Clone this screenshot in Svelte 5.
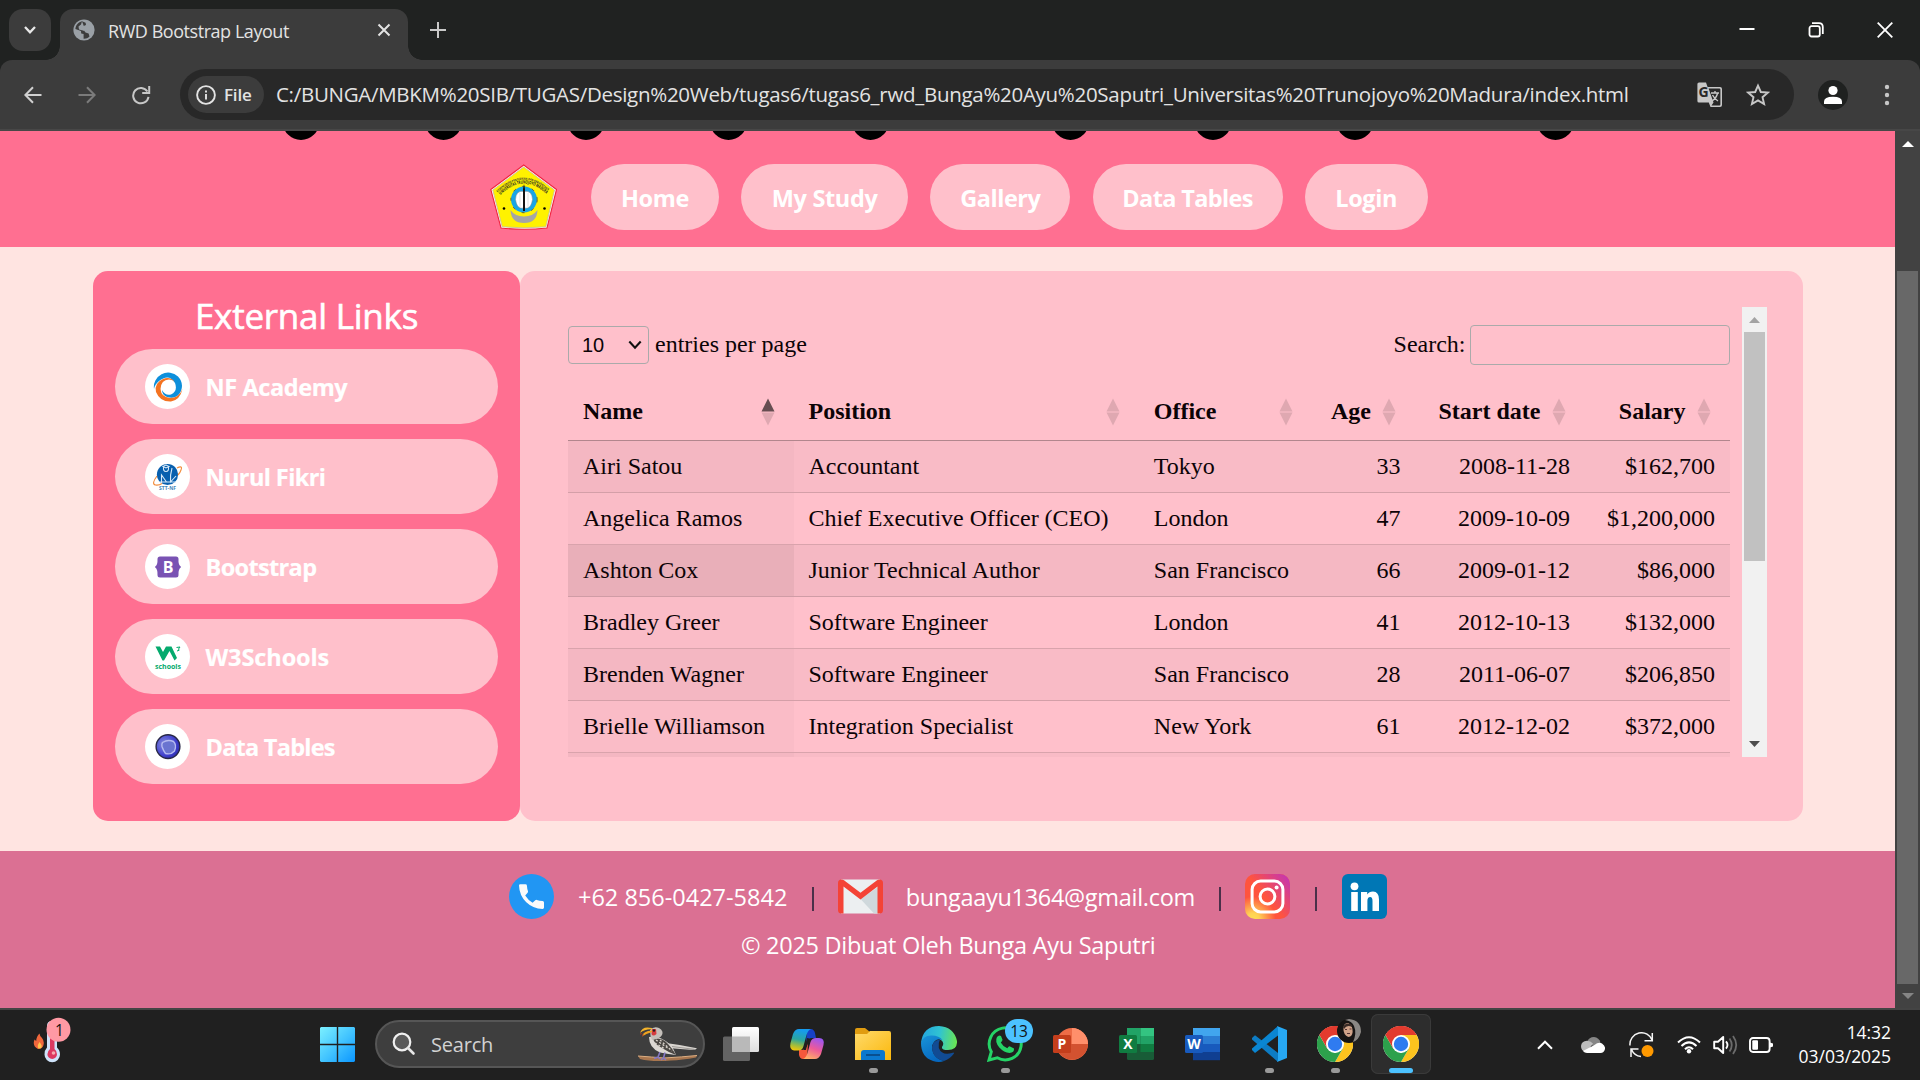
<script>
  const nav = [
    { label: 'Home', w: 128, track: -0.4 },
    { label: 'My Study', w: 167, track: -0.35 },
    { label: 'Gallery', w: 140, track: -0.45 },
    { label: 'Data Tables', w: 190, track: -0.65 },
    { label: 'Login', w: 123, track: -0.35 }
  ];
  const dots = [301, 443.5, 586, 728.5, 870.5, 1070.5, 1213, 1355, 1555.5];
  const links = [
    { label: 'NF Academy', track: -0.4 },
    { label: 'Nurul Fikri', track: -0.6 },
    { label: 'Bootstrap', track: -0.65 },
    { label: 'W3Schools', track: -0.1 },
    { label: 'Data Tables', track: -0.75 }
  ];
  const columns = [
    { label: 'Name', sorted: true },
    { label: 'Position' },
    { label: 'Office' },
    { label: 'Age', num: true },
    { label: 'Start date', num: true },
    { label: 'Salary', num: true }
  ];
  const rows = [
    ['Airi Satou', 'Accountant', 'Tokyo', '33', '2008-11-28', '$162,700'],
    ['Angelica Ramos', 'Chief Executive Officer (CEO)', 'London', '47', '2009-10-09', '$1,200,000'],
    ['Ashton Cox', 'Junior Technical Author', 'San Francisco', '66', '2009-01-12', '$86,000'],
    ['Bradley Greer', 'Software Engineer', 'London', '41', '2012-10-13', '$132,000'],
    ['Brenden Wagner', 'Software Engineer', 'San Francisco', '28', '2011-06-07', '$206,850'],
    ['Brielle Williamson', 'Integration Specialist', 'New York', '61', '2012-12-02', '$372,000'],
    ['', '', '', '', '', '']
  ];
  const hovered = 2;
</script>

{#snippet chrome()}
  <svg width="36" height="36" viewBox="0 0 36 36">
    <circle cx="18" cy="18" r="18" fill="#fff" />
    <path d="M18 18 L2.4 9 A18 18 0 0 1 33.6 9 Z" fill="#e33b2e" />
    <path d="M18 9 H33.6 A18 18 0 0 1 18 36 L25.8 22.5 Z" fill="#fcc31e" />
    <path d="M18 36 A18 18 0 0 1 2.4 9 L10.2 22.5 L18 27 L25.8 22.5 Z" fill="#2da14c" />
    <path d="M2.4 9 A18 18 0 0 1 33.6 9 H18 L10.2 22.5 Z" fill="#e33b2e" />
    <circle cx="18" cy="18" r="9" fill="#fff" />
    <circle cx="18" cy="18" r="7.2" fill="#2f7bf0" />
  </svg>
{/snippet}

{#snippet office(letter, base, bars)}
  <svg width="36" height="36" viewBox="1 0 36 36">
    {#each bars as c, i}
      <rect x="9" y={2 + i * 8} width="27" height="8.2" fill={c} />
    {/each}
    <rect x="1" y="9" width="18" height="18" rx="1.5" fill={base} />
    <text x="10" y="23" text-anchor="middle" class="office-letter">{letter}</text>
  </svg>
{/snippet}

<div class="screen">
  <div class="tabstrip">
    <div class="tab-search">
      <svg width="14" height="10" viewBox="0 0 14 10"><path d="M2 2 L7 7.3 L12 2" fill="none" stroke="#e8e8e8" stroke-width="2.3" /></svg>
    </div>
    <div class="tab">
      <svg class="globe" width="22" height="22" viewBox="0 0 22 22">
        <circle cx="11" cy="11" r="10.6" fill="#9aa0a6" />
        <path d="M9 2.2 C5.5 3 2.6 6.2 2.4 10 L8 12 L8.2 14.6 L10.6 15 V19.7 C14 19.8 15.5 18.5 16.5 17.5 L15.6 14.6 L12.5 13.4 L11 11.4 L8 10 L9.5 7.5 L13 6 L12.6 3.8 Z" fill="#3c3c3c" />
        <path d="M9 2.2 L8 5.5 L5.5 7.5 L6 10.5 L11 11.8 L12 9.5 L15 9.6 L18 12 L19.5 10 C19 6 16.5 3.4 13.6 2.5 L14 6.5 L11 7.5 Z" fill="#9aa0a6" />
      </svg>
      <span class="tab-title">RWD Bootstrap Layout</span>
      <svg width="14" height="14" viewBox="0 0 14 14"><path d="M1.5 1.5 L12.5 12.5 M12.5 1.5 L1.5 12.5" stroke="#e3e3e3" stroke-width="2" /></svg>
    </div>
    <svg class="newtab" width="16" height="16" viewBox="0 0 16 16"><path d="M8 0 V16 M0 8 H16" stroke="#c9c9c9" stroke-width="2" /></svg>
    <div class="win">
      <svg width="16" height="16" viewBox="0 0 16 16"><path d="M0.5 7 H15.5" stroke="#fff" stroke-width="2" /></svg>
      <svg width="16" height="16" viewBox="0 0 16 16"><rect x="1.5" y="4.2" width="10.3" height="10.3" rx="2" fill="none" stroke="#fff" stroke-width="1.8" /><path d="M4 1.2 H11 Q14.8 1.2 14.8 5 V12" fill="none" stroke="#fff" stroke-width="1.8" /></svg>
      <svg width="16" height="16" viewBox="0 0 16 16"><path d="M0.7 0.7 L15.3 15.3 M15.3 0.7 L0.7 15.3" stroke="#fff" stroke-width="1.8" /></svg>
    </div>
  </div>

  <div class="toolbar-wrap">
    <div class="toolbar">
      <svg width="18" height="18" viewBox="0 0 18 18"><path d="M17.5 9 H1.5 M9 1.3 L1.4 9 L9 16.7" fill="none" stroke="#d0d0d0" stroke-width="2" /></svg>
      <svg class="fwd" width="18" height="18" viewBox="0 0 18 18"><path d="M0.5 9 H16.5 M9 1.3 L16.6 9 L9 16.7" fill="none" stroke="#7b7b7b" stroke-width="2" /></svg>
      <svg class="reload" width="20" height="20" viewBox="0 0 20 20"><path d="M16.4 6.5 A7.7 7.7 0 1 0 17.5 11.8" fill="none" stroke="#c7c7c7" stroke-width="2" /><path d="M18.2 1 V8 H11.2" fill="none" stroke="#c7c7c7" stroke-width="2" /></svg>
      <div class="omni">
        <div class="chip">
          <svg width="20" height="20" viewBox="0 0 20 20"><circle cx="10" cy="10" r="8.9" fill="none" stroke="#e3e3e3" stroke-width="1.9" /><path d="M10 9 V14.6 M10 5.4 V7.4" stroke="#e3e3e3" stroke-width="1.9" /></svg>
          <span>File</span>
        </div>
        <span class="url">C:/BUNGA/MBKM%20SIB/TUGAS/Design%20Web/tugas6/tugas6_rwd_Bunga%20Ayu%20Saputri_Universitas%20Trunojoyo%20Madura/index.html</span>
        <svg class="translate" width="26" height="26" viewBox="0 0 26 26">
          <path d="M2 0.5 H9 L10.6 5 H23 Q25 5 25 7 V23 Q25 25 23 25 H13.5 L11.8 20.5 H2 Q0.4 20.5 0.4 19 V2 Q0.4 0.5 2 0.5 Z" fill="#c7c7c7" />
          <path d="M11.6 6.6 H22.4 Q23.4 6.6 23.4 7.6 V22.4 Q23.4 23.4 22.4 23.4 H14.5 L16.5 20.5 Z" fill="#282828" />
          <path d="M14 11 H22 M18 9 V11 M20.6 11 Q19.5 16 15 19 M15.5 13 Q17.5 17 21 19" fill="none" stroke="#c7c7c7" stroke-width="1.4" />
          <text x="1.6" y="15.4" class="g">G</text>
        </svg>
        <svg class="star" width="24" height="24" viewBox="0 0 24 24"><path d="M12 2.6 L14.8 9 L21.8 9.6 L16.5 14.2 L18.1 21.1 L12 17.4 L5.9 21.1 L7.5 14.2 L2.2 9.6 L9.2 9 Z" fill="none" stroke="#c7c7c7" stroke-width="1.9" /></svg>
      </div>
      <svg class="profile" width="30" height="30" viewBox="0 0 30 30"><circle cx="15" cy="15" r="15" fill="#1f2120" /><circle cx="15" cy="10.5" r="4.6" fill="#fff" /><path d="M6 24 V21.5 Q6 16.8 15 16.8 Q24 16.8 24 21.5 V24 Z" fill="#fff" /></svg>
      <svg width="6" height="22" viewBox="0 0 6 22"><g fill="#c7c7c7"><circle cx="3" cy="3" r="2.2" /><circle cx="3" cy="11" r="2.2" /><circle cx="3" cy="19" r="2.2" /></g></svg>
    </div>
  </div>

  <div class="viewport">
    <div class="page">
      <header>
        <svg class="balls" width="1895" height="33" viewBox="0 0 1895 33">
          {#each dots as x}<circle cx={x} cy="-9.4" r="18.4" />{/each}
        </svg>
        <nav>
          <svg class="crest" width="68" height="66" viewBox="0 0 68 66">
            <path d="M33.7 1 L66.5 25.5 L57 64 Q34 66.5 11 64 L0.8 25.5 Z" fill="#fff" stroke="#f0233f" stroke-width="1.1" />
            <path d="M33.7 3 L64.5 26 L55.8 62.8 Q34 65 12.2 62.8 L2.8 26 Z" fill="#fff200" stroke="#c9c29a" stroke-width="0.9" />
            <path id="arcA" d="M10.5 31 Q34 8 57.5 31" fill="none" />
            <path id="arcB" d="M7.5 28.5 Q34 3 60 28.5" fill="none" />
            <text class="crest-a"><textPath href="#arcA" textLength="52" lengthAdjust="spacingAndGlyphs">UNIVERSITAS TRUNOJOYO MADURA</textPath></text>
            <text class="crest-b"><textPath href="#arcB" textLength="57" lengthAdjust="spacingAndGlyphs">KEMENTERIAN PENDIDIKAN DAN KEBUDAYAAN</textPath></text>
            <path d="M20.5 46 Q25 52.5 34 52.5 Q43 52.5 47.5 46 Q47 59 34 59 Q21 59 20.5 46 Z" fill="#a5a5a5" />
            <circle cx="34" cy="35.5" r="13" fill="#19a5e5" />
            <circle cx="34" cy="35.5" r="13.2" fill="none" stroke="#5c5b36" stroke-width="1" stroke-dasharray="3 7" />
            <path d="M34 27.5 Q26 26 25.5 35.5 Q27 46 34 44 Q41 46 42.5 35.5 Q42 26 34 27.5 Z" fill="#fff" stroke="#888" stroke-width="0.5" />
            <path d="M30 29 V43 M38 29 V43" stroke="#ccc" stroke-width="0.6" />
            <path d="M34 20 L35 25 V47 H33 V25 Z" fill="#111" />
            <circle cx="14" cy="44.5" r="1.3" /><circle cx="54.5" cy="44.5" r="1.3" />
          </svg>
          {#each nav as n}
            <a class="navpill" href="#top" style="width:{n.w}px;letter-spacing:{n.track}px">{n.label}</a>
          {/each}
        </nav>
      </header>

      <main>
        <aside>
          <h2>External Links</h2>
          {#each links as link, i}
            <a class="link" href="#top" style="letter-spacing:{link.track}px">
              <span class="badge">
                {#if i === 0}
                  <svg width="30" height="30" viewBox="0 0 30 30">
                    <path d="M1 17 A14.3 14.3 0 0 1 25 4.5 Q31 11 28 19 Q24 28 14 25 Q9 23 9 18 Q12 24 18 22.5 Q25 19 22 11 Q16 1 6 9 Q2 12 1 17 Z" fill="#0d8fdb" />
                    <path d="M22 10 Q17 4 10 7 Q1 11 3 20 Q7 30 18 29.5 Q27 28 29.5 17 Q26 26 17 26 Q8 25 7.5 17 Q8 8 16 7.6 Q20 8 22 10 Z" fill="#f47321" />
                  </svg>
                {:else if i === 1}
                  <svg width="32" height="30" viewBox="0 0 32 30">
                    <circle cx="15.5" cy="12.5" r="10.6" fill="#075fae" />
                    <path d="M5 14 Q-1 22 3.5 23 Q7 23.5 10 21.5 M25 6 Q31 3 29 8 Q28 11 26 13" fill="none" stroke="#f28b3a" stroke-width="1.1" />
                    <path d="M9.5 21 V13 L14.5 20 M20 6 Q18 13 18.5 20 L24 14 M11 4.5 L14 3 L17 4.5 L14 6 Z M11.5 5 Q11 9.5 14 9.5 Q17 9.5 16.5 5 M8 20 H24" fill="none" stroke="#d7e9f8" stroke-width="1.1" />
                    <text x="15.5" y="28" text-anchor="middle" class="stt">STT-NF</text>
                  </svg>
                {:else if i === 2}
                  <svg width="26" height="24" viewBox="0 0 26 24">
                    <path d="M5 1.5 H21 Q23.5 1.5 23.5 4 Q23.2 10 25.8 11.5 V12.5 Q23.2 14 23.5 20 Q23.5 22.5 21 22.5 H5 Q2.5 22.5 2.5 20 Q2.8 14 0.2 12.5 V11.5 Q2.8 10 2.5 4 Q2.5 1.5 5 1.5 Z" fill="#7952b3" />
                    <text x="13" y="17.6" text-anchor="middle" class="bs">B</text>
                  </svg>
                {:else if i === 3}
                  <svg width="28" height="28" viewBox="0 0 28 28">
                    <path d="M1.5 3.5 H6 L9 9 L12 3.5 H17.5 L23 15 L20.5 17.5 L15.5 8 L10 17.5 H8.5 Z" fill="#04aa6d" />
                    <path d="M22.5 4.5 L26 4 L24.5 6 Q26.5 7.5 23 8" fill="none" stroke="#04aa6d" stroke-width="1" />
                    <text x="14" y="25.5" text-anchor="middle" class="w3">schools</text>
                  </svg>
                {:else}
                  <svg width="26" height="26" viewBox="0 0 26 26">
                    <defs><radialGradient id="dt" cx="0.35" cy="0.4" r="0.75"><stop offset="0" stop-color="#8a90dc" /><stop offset="0.6" stop-color="#4444cf" /><stop offset="1" stop-color="#2525a8" /></radialGradient></defs>
                    <circle cx="13" cy="12.6" r="11.9" fill="url(#dt)" stroke="#282846" stroke-width="1.4" />
                    <path d="M7.5 8.5 Q13 5 18.5 7.5 Q22 11 19.5 17 Q16 21 10.5 19.5 Q8.5 17 7 12.5 Q6.5 10 7.5 8.5 Z" fill="#6a74d0" stroke="#b6baf0" stroke-width="1.4" />
                  </svg>
                {/if}
              </span>
              {link.label}
            </a>
          {/each}
        </aside>

        <section>
          <div class="scroller">
            <div class="dt">
              <div class="controls">
                <div class="select">10
                  <svg width="14" height="10" viewBox="0 0 14 10"><path d="M1.3 1.5 L7 7.6 L12.7 1.5" fill="none" stroke="#111" stroke-width="2.1" /></svg>
                </div>
                <span class="per">entries per page</span>
                <span class="search-label">Search:</span>
                <input aria-label="Search" />
              </div>
              <div class="row head">
                {#each columns as c}
                  <div class="cell" class:num={c.num}>
                    <span>{c.label}</span>
                    <svg width="14" height="28" viewBox="0 0 14 28"><path d="M7 0.5 L13.5 13.5 H0.5 Z" fill-opacity={c.sorted ? 0.6 : 0.125} /><path d="M7 27.5 L13.5 14.5 H0.5 Z" fill-opacity="0.125" /></svg>
                  </div>
                {/each}
              </div>
              {#each rows as r, i}
                <div class="row body" class:odd={i % 2 === 0} class:hover={i === hovered}>
                  {#each r as v, j}
                    <div class="cell" class:num={j > 2}>{v}</div>
                  {/each}
                </div>
              {/each}
            </div>
            <div class="sb light">
              <svg width="11" height="6" viewBox="0 0 11 6"><path d="M5.5 0 L11 6 H0 Z" fill="#a3a3a3" /></svg>
              <div class="thumb"></div>
              <svg width="11" height="6" viewBox="0 0 11 6"><path d="M5.5 6 L11 0 H0 Z" fill="#4d4d4d" /></svg>
            </div>
          </div>
        </section>
      </main>

      <footer>
        <div class="contacts">
          <svg width="45" height="45" viewBox="0 0 45 45"><circle cx="22.5" cy="22.5" r="22.5" fill="#2196f3" /><path d="M10 11.5 Q10 10.2 11.3 10.2 H16.5 Q17.8 10.2 17.9 11.5 Q18.1 15 19 17.2 Q19.2 18 18.6 18.7 L16.2 21.6 Q19 26.2 23.6 28.8 L26.3 26.2 Q27 25.6 27.8 25.9 Q30.5 26.9 33.6 27 Q35 27.1 35 28.4 V33.4 Q35 34.8 33.6 34.9 Q24 34.8 17.3 28.3 Q10.3 21.4 10 11.5 Z" fill="#fafafa" /></svg>
          <span class="phone">+62 856-0427-5842</span>
          <i></i>
          <svg width="45" height="35" viewBox="0 0 45 35"><rect x="3" y="0.5" width="39" height="34" fill="#eceff1" /><path d="M22.5 20 L40 8 V34.5 H36 Z" fill="#cfd8dc" /><path d="M0 4 Q0 0.5 3.5 0.5 Q5 0.5 6 1.3 L22.5 13.8 L39 1.3 Q40 0.5 41.5 0.5 Q45 0.5 45 4 V31 Q45 34.5 41.5 34.5 H39.5 V7.5 L22.5 20.5 L5.5 7.5 V34.5 H3.5 Q0 34.5 0 31 Z" fill="#f44336" /></svg>
          <span class="mail">bungaayu1364@gmail.com</span>
          <i></i>
          <svg width="45" height="45" viewBox="0 0 45 45">
            <defs>
              <radialGradient id="ig1" cx="0.18" cy="1" r="1"><stop offset="0" stop-color="#ffdd55" /><stop offset="0.13" stop-color="#ffd355" /><stop offset="0.5" stop-color="#ff543e" /><stop offset="1" stop-color="#ff543e" /></radialGradient>
              <linearGradient id="ig2" x1="0.45" y1="0.5" x2="1" y2="0.05"><stop offset="0" stop-color="#c837ab" stop-opacity="0" /><stop offset="0.9" stop-color="#c837ab" /></linearGradient>
            </defs>
            <rect width="45" height="45" rx="10" fill="url(#ig1)" /><rect width="45" height="45" rx="10" fill="url(#ig2)" />
            <rect x="7.1" y="7.1" width="30.8" height="30.8" rx="8.5" fill="none" stroke="#fff" stroke-width="3" />
            <circle cx="22.5" cy="22.5" r="7.4" fill="none" stroke="#fff" stroke-width="3" /><circle cx="31.6" cy="13.4" r="2" fill="#fff" />
          </svg>
          <i></i>
          <svg width="45" height="45" viewBox="0 0 45 45"><rect width="45" height="45" rx="6" fill="#0077b5" /><circle cx="12.5" cy="12.3" r="3.9" fill="#fff" /><path d="M9.2 18 H15.8 V37 H9.2 Z M19 18 H25.2 V20.6 Q27 17.5 31 17.5 Q37 17.8 37 25.5 V37 H30.5 V27 Q30.5 23 28.2 23 Q25.4 23 25.4 27 V37 H19 Z" fill="#fff" /></svg>
        </div>
        <p>© 2025 Dibuat Oleh Bunga Ayu Saputri</p>
      </footer>
    </div>
    <div class="sb dark">
      <svg width="12" height="6" viewBox="0 0 12 6"><path d="M6 0 L12 6 H0 Z" fill="#fff" /></svg>
      <div class="thumb"></div>
      <svg width="12" height="6" viewBox="0 0 12 6"><path d="M6 6 L12 0 H0 Z" fill="#858585" /></svg>
    </div>
  </div>

  <div class="taskbar">
    <svg class="weather" width="44" height="50" viewBox="0 0 44 50">
      <path d="M5 33 Q-1 30 1.5 23.5 L3.2 25 Q3.5 20 6.5 17.5 Q7 21 9 22 Q11.5 25 10.5 29 Q9.5 33 5 33 Z" fill="#f0673c" /><path d="M5.5 32.5 Q3.5 30 6.5 26 Q10 30 8 32.3 Z" fill="#ffc34c" />
      <path d="M14 10 Q14 5 19 5 Q24 5 24 10 V31.5 Q27 34 27 38.5 A7.7 7.7 0 0 1 11.5 38.5 Q11.5 34 14 31.5 Z" fill="#cfe3fa" />
      <path d="M17 12 H21.5 V33 Q24 35 24 38.2 A4.8 4.8 0 0 1 14.4 38.2 Q14.5 35 17 33 Z" fill="#dd3860" /><circle cx="20.5" cy="37" r="1.8" fill="#f8a8b0" />
      <circle cx="25.5" cy="13.8" r="12" fill="#ff99a4" />
      <text x="26.5" y="19.5" text-anchor="middle" class="n">1</text>
    </svg>
    <svg class="start" width="35" height="35" viewBox="0 0 35 35">
      <defs><linearGradient id="win" gradientUnits="userSpaceOnUse" x1="0" y1="0" x2="35" y2="35"><stop offset="0" stop-color="#7cf0ff" /><stop offset="0.5" stop-color="#45c6ff" /><stop offset="1" stop-color="#0b96ff" /></linearGradient></defs>
      <path d="M1 0 H16.8 V16.8 H0 V1 Z M18.2 0 H34 L35 1 V16.8 H18.2 Z M0 18.2 H16.8 V35 H1 L0 34 Z M18.2 18.2 H35 V34 L34 35 H18.2 Z" fill="url(#win)" />
    </svg>
    <div class="searchbox">
      <svg width="24" height="24" viewBox="0 0 24 24"><circle cx="10" cy="10" r="8.3" fill="#5a5a5a" stroke="#f0f0f0" stroke-width="2.2" /><path d="M16 16 L21.5 21.5" stroke="#e6e6e6" stroke-width="2.6" stroke-linecap="round" /></svg>
      <span>Search</span>
      <svg class="bird" width="60" height="37" viewBox="0 0 60 37">
        <path d="M0 30 Q14 31 26 32 Q44 31 59 29.5 L58 31.5 Q44 34 33 34.5 Q14 36 2 33 Z" fill="#a8764f" /><path d="M0 30 Q14 31 26 32 Q44 31 59 29.5" fill="none" stroke="#dcae82" stroke-width="1" />
        <path d="M28 17 Q44 19 59 22.3 Q58 24.3 52 23.7 L30 22 Z" fill="#d9d5d0" /><path d="M34 20.5 L56 23.3" stroke="#8e8a86" stroke-width="0.8" />
        <path d="M11 11 Q18 9 26 14 Q34 18 38 29 Q31 28 22 26.5 Q11 22 11 11 Z" fill="#dcd8d3" />
        <path d="M15 12 Q26 12 30 18 Q34 22 38 29 Q30 26 24 22 Q16 18 15 12 Z" fill="#4b4743" /><path d="M18 14 L31 23 M22 14 L34 25 M17 17 L27 23" stroke="#d8d2ca" stroke-width="1.3" stroke-dasharray="2 2" />
        <path d="M12 4 Q16 0 21 2 Q26 5 24 9 Q22 13 14 14 Q12 10 12 4 Z" fill="#c4bfba" /><path d="M14 3 H18 L18.5 8 Q15 11 13.5 8 Z" fill="#d53b3e" /><circle cx="16" cy="4.5" r="1.2" fill="#222" />
        <path d="M14 2 Q4 -0.5 2 7 Q7 3 14 3.4 Z" fill="#f4b32b" /><path d="M14 4.4 Q5 4.6 4 10.5 Q8 7.5 14 6 Z" fill="#f0a41f" /><path d="M2.5 6.5 L2 9 L4 7.6 Z M4.6 8 L4 10.8 L6 9 Z" fill="#9a352e" />
        <path d="M22 26 L20 31 M16 32.5 L20 31 L22 33 M27 26.5 L25.5 32 M23 34 L25.5 32 L28 34" fill="none" stroke="#8577c4" stroke-width="1.6" />
      </svg>
    </div>
    <div class="apps">
      <div class="app">
        <svg width="36" height="36" viewBox="0 0 36 36"><defs><linearGradient id="tv" x1="0" y1="0" x2="0" y2="1"><stop offset="0" stop-color="#fff" /><stop offset="1" stop-color="#dedede" /></linearGradient></defs><rect x="0" y="10.5" width="27" height="24.5" rx="1.5" fill="#636363" /><rect x="9" y="1" width="27" height="25" rx="1.5" fill="url(#tv)" /><path d="M9 10.5 H27 V26 H9 Z" fill="#b9b9b9" /></svg>
      </div>
      <div class="app">
        <svg width="36" height="36" viewBox="0 0 36 36">
          <defs><linearGradient id="cp1" x1="0.3" y1="0" x2="0.1" y2="1"><stop offset="0" stop-color="#169bee" /><stop offset="0.45" stop-color="#2aa6a0" /><stop offset="0.75" stop-color="#a4bd3b" /><stop offset="1" stop-color="#ffc800" /></linearGradient><linearGradient id="cp2" x1="0.7" y1="0" x2="0.3" y2="1"><stop offset="0" stop-color="#9c56f2" /><stop offset="0.5" stop-color="#ed5a99" /><stop offset="1" stop-color="#ffae67" /></linearGradient></defs>
          <path d="M18 3 H22 Q25 3.3 26 7 L27 12 H23 Q19 12 17 17 Z" fill="#1741c7" /><path d="M10 24 H13 Q17 24 19 17 L18 33 H14 Q11 33 10 29 Z" fill="#f4583c" />
          <path d="M10 3 H22 Q19 4 17.5 9 L14.5 20 Q13.5 24.5 9 24.5 H5 Q0 24 1.5 17 L4 8 Q6 3 10 3 Z" fill="url(#cp1)" />
          <path d="M26 33 H14 Q17 32 18.5 27 L21.5 16 Q22.8 12 27 12 H30 Q36 12 34.5 19 L32 28 Q30 33 26 33 Z" fill="url(#cp2)" />
          <path d="M18 12 L20.4 12.4 Q19.8 14 18.6 18 L16.8 24 H14.5 Q15.5 22 16 20 Z" fill="#202020" />
        </svg>
      </div>
      <div class="app on">
        <svg width="36" height="36" viewBox="0 0 36 36"><defs><linearGradient id="fo" x1="0" y1="0" x2="1" y2="1"><stop offset="0" stop-color="#ffda6b" /><stop offset="1" stop-color="#fbb80c" /></linearGradient></defs><path d="M0 4 Q0 2 2 2 H10 L15 6 V12 H0 Z" fill="#e09c10" /><path d="M0 8 H12 L15 5 H34 Q36 5 36 7 V34 H0 Z" fill="url(#fo)" /><path d="M6 27 Q6 24 9 24 H27 Q30 24 30 27 V34 H6 Z" fill="#0b78ce" /><path d="M11 29 H25" stroke="#094f8f" stroke-width="2" /></svg>
      </div>
      <div class="app">
        <svg width="36" height="36" viewBox="0 0 36 36">
          <defs><linearGradient id="ed1" x1="0" y1="0.4" x2="1" y2="0.5"><stop offset="0" stop-color="#23a5df" /><stop offset="0.5" stop-color="#30c3d2" /><stop offset="1" stop-color="#69e553" /></linearGradient><linearGradient id="ed2" x1="0" y1="0" x2="0.5" y2="1"><stop offset="0" stop-color="#1994d8" /><stop offset="1" stop-color="#0668c0" /></linearGradient></defs>
          <path d="M0 17 Q2 0 18 0 Q33 1 36 15 Q36.5 24 27 24 Q20.5 24 21 21 Q24 17 20 14 Q12 8 0 17 Z" fill="url(#ed1)" />
          <path d="M0 17 Q2 9 11 9.5 Q18 9.5 21.5 14 Q14 11 11 20 Q11 32 23 35 Q18 37 12 35 Q0 31 0 17 Z" fill="url(#ed2)" />
          <path d="M19 13.5 Q12 14 11 21 Q11 32 23 35 Q29 33 33 27.5 Q33 26 31 27 Q21 30 17.8 22 Q17 17 19 13.5 Z" fill="#114b93" />
        </svg>
      </div>
      <div class="app on">
        <svg width="36" height="36" viewBox="0 0 36 36"><path d="M2 34 L4.3 25.8 A16 16 0 1 1 10.3 31.8 Z" fill="#202020" stroke="#25d366" stroke-width="3" /><path d="M10 11 Q12 8.5 14 10 L15.5 13.8 Q15.5 15 13.8 16.5 Q15.5 20 20.3 22.3 Q22 19.8 23 20.5 L27 22.5 Q27.5 26.5 22.5 27 Q17 26.5 12.3 21.5 Q7.5 15.5 10 11 Z" fill="#25d366" /></svg>
        <span class="count">13</span>
      </div>
      <div class="app">
        <svg width="36" height="36" viewBox="1 0 36 36"><circle cx="20" cy="18" r="16" fill="#ed6c47" /><path d="M20 2 A16 16 0 0 1 36 18 H20 Z" fill="#ff8f6b" /><path d="M36 18 A16 16 0 0 1 4.4 21 V18 Z" fill="#d35230" /><rect x="1" y="9" width="18" height="18" rx="1.5" fill="#c43e1c" /><text x="10" y="23" text-anchor="middle" class="office-letter">P</text></svg>
      </div>
      <div class="app">
        <svg width="36" height="36" viewBox="1 0 36 36"><rect x="9" y="2" width="27" height="32" rx="1.5" fill="#185c37" /><path d="M9 2 H22.5 V10 H9 Z M9 10 H22.5 V18 H9 Z" fill="#21a366" /><path d="M22.5 2 H36 V10 H22.5 Z" fill="#33c481" /><path d="M22.5 10 H36 V18 H22.5 Z" fill="#21a366" /><path d="M22.5 18 H36 V26 H22.5 Z" fill="#107c41" /><rect x="1" y="9" width="18" height="18" rx="1.5" fill="#107c41" /><text x="10" y="23" text-anchor="middle" class="office-letter">X</text></svg>
      </div>
      <div class="app">{@render office('W', '#185abd', ['#41a5ee', '#2b7cd3', '#185abd', '#103f91'])}</div>
      <div class="app on">
        <svg width="36" height="36" viewBox="0 0 36 36"><path d="M1 12 L4 9.2 L27 27 V36 L1 13.5 Z" fill="#0d7cc4" /><path d="M1 24 L4 27 L27 9.5 V0 L1 22.5 Z" fill="#0a86d2" /><path d="M26 0 L36 4 V32 L26 36 Q27 35 27 33 V3 Q27 1 26 0 Z" fill="#27a8f3" /></svg>
      </div>
      <div class="app on">{@render chrome()}
        <svg class="avatar" width="24" height="24" viewBox="0 0 24 24"><circle cx="12" cy="12" r="12" fill="#171413" /><path d="M12 0 Q24 1 24 13 Q22 21 16 23 Q20 14 17 7 Q15 2 8 1 Z" fill="#8a8784" /><ellipse cx="11" cy="11" rx="4.5" ry="7" fill="#d0a288" transform="rotate(-12 11 11)" /><path d="M6 8 Q9 2 15 6 L15 8 Q10 5 7 10 Z" fill="#3a2b26" /><path d="M8 10.5 h2 M12.5 10 h2 M10 14.5 h3" stroke="#533" stroke-width="1" /></svg>
      </div>
      <div class="app active">{@render chrome()}</div>
    </div>
    <div class="tray">
      <svg width="16" height="10" viewBox="0 0 16 10"><path d="M1 8.7 L8 1.7 L15 8.7" fill="none" stroke="#fff" stroke-width="2" /></svg>
      <svg class="cloud" width="24" height="16" viewBox="0 0 24 16"><path d="M6 5 Q8 0 13 0 Q18 0.5 19.5 5.5 L12 9 Z" fill="#868686" /><path d="M4 15 Q0 13.5 0 9 Q0.5 4 6 3.8 Q9.5 4 12 6.5 L6 15 Z" fill="#bdbdbd" /><path d="M2 14 L13 8.3 Q18 4.5 21 6.5 Q24.5 9 24 12 Q23 16 19.5 16 H6 Q3.5 16 2 14 Z" fill="#fff" /></svg>
      <svg class="sync" width="26" height="26" viewBox="0 0 26 26"><path d="M1 13.5 A11.5 11.5 0 0 1 23.3 8.5 M23.3 1 V8.8 H15.5 M2 25 V17 H9.5 M2.5 17.5 A11.5 11.5 0 0 0 12 24.5" fill="none" stroke="#f5f5f5" stroke-width="1.5" /><circle cx="18.5" cy="19" r="6" fill="#ff9900" /></svg>
      <svg class="wifi" width="24" height="18" viewBox="0 0 24 18"><g fill="none" stroke="#fff" stroke-width="2"><path d="M1 6.5 Q12 -4 23 6.5" /><path d="M4.5 10 Q12 2.8 19.5 10" /><path d="M8 13.3 Q12 9.2 16 13.3" /></g><circle cx="12" cy="15.3" r="2.2" fill="#fff" /></svg>
      <svg class="vol" width="25" height="20" viewBox="0 0 25 20"><path d="M1.2 6.8 H5 L10.2 2 V18 L5 13.2 H1.2 Z" fill="none" stroke="#fff" stroke-width="1.9" stroke-linejoin="round" /><path d="M13 6.4 Q16 10 13 13.6" fill="none" stroke="#fff" stroke-width="1.8" /><path d="M16.5 3.5 Q21 10 16.5 16.5 M20 1 Q26.5 10 20 19" fill="none" stroke="#6b6b6b" stroke-width="1.8" /></svg>
      <svg class="bat" width="24" height="16" viewBox="0 0 24 16"><rect x="1" y="1" width="19.6" height="14" rx="3" fill="none" stroke="#fff" stroke-width="1.9" /><rect x="3.3" y="3.3" width="5.7" height="9.4" rx="1" fill="#fff" /><path d="M21 5.5 L24 6.5 V9.5 L21 10.5 Z" fill="#fff" /></svg>
      <div class="clock"><span>14:32</span><span>03/03/2025</span></div>
    </div>
  </div>
</div>

<style>
  :global(body) { margin: 0; background: #202020; overflow: hidden; }
  .screen { width: 1920px; height: 1080px; overflow: hidden; display: flex; flex-direction: column; font-family: "Open Sans", "Noto Sans", sans-serif; }
  svg { display: block; flex: none; }
  a { text-decoration: none; color: #fff; }

  .tabstrip { height: 60px; flex: none; background: #202221; display: flex; align-items: center; box-sizing: border-box; padding-left: 9px; }
  .tab-search { width: 42px; height: 42px; border-radius: 14px; background: #3c3c3c; display: flex; align-items: center; justify-content: center; margin-right: 9px; }
  .tab { position: relative; align-self: flex-end; width: 348px; height: 51px; border-radius: 13px 13px 0 0; background: #3c3c3c; display: flex; align-items: center; box-sizing: border-box; padding: 0 17px 9px 13px; }
  .tab::before, .tab::after { content: ""; position: absolute; bottom: 0; width: 14px; height: 14px; }
  .tab::before { left: -14px; background: radial-gradient(circle at 0 0, transparent 13.5px, #3c3c3c 14px); }
  .tab::after { right: -14px; background: radial-gradient(circle at 100% 0, transparent 13.5px, #3c3c3c 14px); }
  .tab-title { flex: 1; margin-left: 13px; padding-top: 2px; font-size: 18px; letter-spacing: -0.45px; color: #e3e3e3; white-space: nowrap; }
  .newtab { margin-left: 22px; }
  .win { margin-left: auto; display: flex; gap: 53px; padding-right: 27px; }

  .toolbar-wrap { background: #202221; height: 71px; flex: none; }
  .toolbar { height: 71px; box-sizing: border-box; border-radius: 12px 12px 0 0; border-bottom: 2px solid #474747; background: #3c3c3c; display: flex; align-items: center; padding: 0 30px 0 24px; }
  .fwd { margin-left: 36px; }
  .reload { margin-left: 35px; }
  .omni { width: 1614px; height: 51px; margin-left: 29px; border-radius: 26px; background: #282828; display: flex; align-items: center; box-sizing: border-box; padding-left: 8px; }
  .chip { width: 76px; height: 37px; border-radius: 19px; background: #3c3c3c; display: flex; align-items: center; box-sizing: border-box; padding-left: 8px; gap: 8px; color: #e3e3e3; font-size: 17px; font-weight: 600; letter-spacing: -0.2px; }
  .url { margin-left: 12px; padding-bottom: 2px; width: 1421px; font-size: 20.5px; letter-spacing: -0.29px; color: #e3e3e3; white-space: nowrap; }
  .star { margin-left: 23px; }
  .profile { margin-left: 24px; margin-right: 36px; }
  .g { font: bold 14px "Open Sans", sans-serif; fill: #282828; }

  .viewport { height: 877px; flex: none; display: flex; }
  .page { width: 1895px; background: #ffe4e1; display: flex; flex-direction: column; }
  header { height: 116px; background: #ff6f91; }
  nav { display: flex; gap: 22.2px; padding-left: 489.6px; }
  .crest { margin-right: 11.2px; }
  .crest-a { font: bold 4.6px "Open Sans", sans-serif; fill: #222; }
  .crest-b { font: bold 3px "Open Sans", sans-serif; fill: #333; }
  .navpill { height: 66px; border-radius: 33px; background: #ffc0cb; text-align: center; font-size: 23.5px; font-weight: 700; line-height: 69px; }

  main { display: flex; padding: 24px 0 0 93px; height: 580px; }
  aside { width: 427px; height: 550px; border-radius: 15px; background: #ff6f91; box-sizing: border-box; padding: 22px 22px 0; }
  h2 { margin: 0 0 9px; height: 47px; text-align: center; color: #fff; font-size: 35px; line-height: 46px; font-weight: 500; letter-spacing: -0.25px; -webkit-text-stroke: 0.6px #fff; }
  .link { display: flex; align-items: center; gap: 15.5px; height: 75px; margin-bottom: 15px; border-radius: 38px; background: #ffc0cb; box-sizing: border-box; padding-left: 30px; font-size: 23.5px; font-weight: 700; -webkit-text-stroke: 0.2px #fff; }
  .badge { width: 45px; height: 45px; border-radius: 50%; background: #fff; display: flex; align-items: center; justify-content: center; letter-spacing: 0; -webkit-text-stroke: 0; }
  .stt { font: bold 5px "Open Sans", sans-serif; fill: #4584b8; }
  .bs { font: bold 16px "Open Sans", sans-serif; fill: #fff; }
  .w3 { font: bold 7px "Open Sans", sans-serif; fill: #04aa6d; }

  section { width: 1283px; height: 550px; border-radius: 15px; background: #ffc0cb; box-sizing: border-box; padding: 36px 36px 0 48px; }
  .scroller { height: 450px; overflow: hidden; display: flex; justify-content: space-between; font-family: "Liberation Serif", "Times New Roman", serif; font-size: 24px; color: #0c0306; }
  .dt { width: 1162px; height: 450px; overflow: hidden; }
  .controls { height: 76px; display: flex; align-items: center; }
  .select { width: 81px; height: 38px; border: 1px solid #aaa; border-radius: 4px; box-sizing: border-box; display: flex; align-items: center; justify-content: space-between; padding: 0 6px 0 13px; font: 20px "Liberation Sans", Arial, sans-serif; }
  .per { margin-left: 6px; padding-bottom: 2px; }
  .search-label { margin-left: auto; padding-bottom: 2px; }
  input { width: 260px; height: 40px; margin-left: 4.5px; padding: 0; box-sizing: border-box; border: 1px solid #aaa; border-radius: 4px; background: transparent; }
  .row { display: grid; grid-template-columns: 225.5px 345.3px 173px 103.7px 169.5px 145px; }
  .head { height: 58px; border-bottom: 1px solid rgba(0, 0, 0, 0.3); font-weight: 700; box-sizing: border-box; }
  .cell { box-sizing: border-box; padding: 0 15px; white-space: nowrap; line-height: 50px; height: 51px; }
  .num { text-align: right; }
  .head .cell { display: flex; align-items: center; justify-content: space-between; padding-right: 19px; height: 57px; }
  .head .cell span { padding-bottom: 2px; }
  .head .num { justify-content: flex-end; gap: 11.5px; }
  .body { height: 52px; box-sizing: border-box; border-bottom: 1px solid rgba(0, 0, 0, 0.15); }
  .body .cell:first-child { background: rgba(0, 0, 0, 0.019); }
  .odd { background: rgba(0, 0, 0, 0.025); }
  .hover { background: rgba(0, 0, 0, 0.04); }
  .hover .cell:first-child { background: rgba(0, 0, 0, 0.046); }

  .sb { box-sizing: border-box; display: flex; flex-direction: column; align-items: center; }
  .light { width: 25px; height: 450px; background: #f1f1f1; padding: 10px 0; }
  .light .thumb { width: 21px; height: 229px; margin: 9px 0 180px; background: #c1c1c1; flex: none; }
  .dark { width: 25px; background: #424242; padding-top: 10px; }
  .dark .thumb { width: 21px; height: 713px; margin: 124px 0 9px; background: #686868; flex: none; }

  footer { height: 157px; background: #db7093; color: #fff; font-size: 23.5px; }
  .contacts { display: flex; align-items: center; height: 45px; padding: 23px 0 0 509px; }
  .contacts i { width: 2px; height: 24px; margin: 5px 24.6px 0; background: #4a3049; }
  .phone { margin-left: 24px; width: 209px; letter-spacing: 0; white-space: nowrap; }
  .mail { margin-left: 22.5px; width: 288.5px; letter-spacing: -0.3px; white-space: nowrap; }
  footer p { margin: 9px 0 0 741px; line-height: 35px; letter-spacing: -0.28px; white-space: nowrap; }

  .taskbar { height: 72px; flex: none; box-sizing: border-box; border-top: 2px solid #444; background: #202020; display: flex; align-items: flex-start; }
  .weather { margin: 6px 0 0 33px; }
  .n { font-size: 15.5px; fill: #111; }
  .start { margin: 17px 0 0 243px; }
  .searchbox { width: 330px; height: 48px; margin: 10px 0 0 20px; border-radius: 24px; box-sizing: border-box; border: 2px solid #565656; background: #3e3e3e; display: flex; align-items: center; padding: 0 5px 0 15px; }
  .searchbox span { flex: 1; margin-left: 15px; font-size: 20px; letter-spacing: -0.2px; color: #d2d2d2; }
  .apps { display: flex; margin-left: 3px; padding-top: 4px; }
  .app { position: relative; width: 60px; height: 60px; margin: 0 3px; border-radius: 7px; box-sizing: border-box; padding: 12px; }
  .on::after, .active::after { content: ""; position: absolute; left: 25.5px; top: 54px; width: 9px; height: 5px; border-radius: 3px; background: #9a9a9a; }
  .active { background: #2d2d2d; box-shadow: inset 0 0 0 1px #3a3a3a; }
  .active::after { left: 18px; width: 24px; background: #4cc2ff; }
  .count { position: absolute; left: 30px; top: 5px; width: 28px; height: 24px; border-radius: 12px; background: #4cc2ff; color: #111; font-size: 15.5px; line-height: 24px; text-align: center; }
  .avatar { position: absolute; left: 32px; top: 5px; }
  .office-letter { font: bold 14px "Open Sans", sans-serif; fill: #fff; }
  .tray { display: flex; align-items: center; height: 70px; margin-left: auto; padding-right: 29px; box-sizing: border-box; }
  .cloud { margin-left: 28px; }
  .sync { margin-left: 24px; }
  .wifi { margin-left: 22px; }
  .vol { margin-left: 12px; }
  .bat { margin-left: 11px; }
  .clock { width: 118px; display: flex; flex-direction: column; align-items: flex-end; padding-bottom: 2px; color: #fff; font-size: 17.5px; line-height: 24px; letter-spacing: -0.05px; }
</style>
